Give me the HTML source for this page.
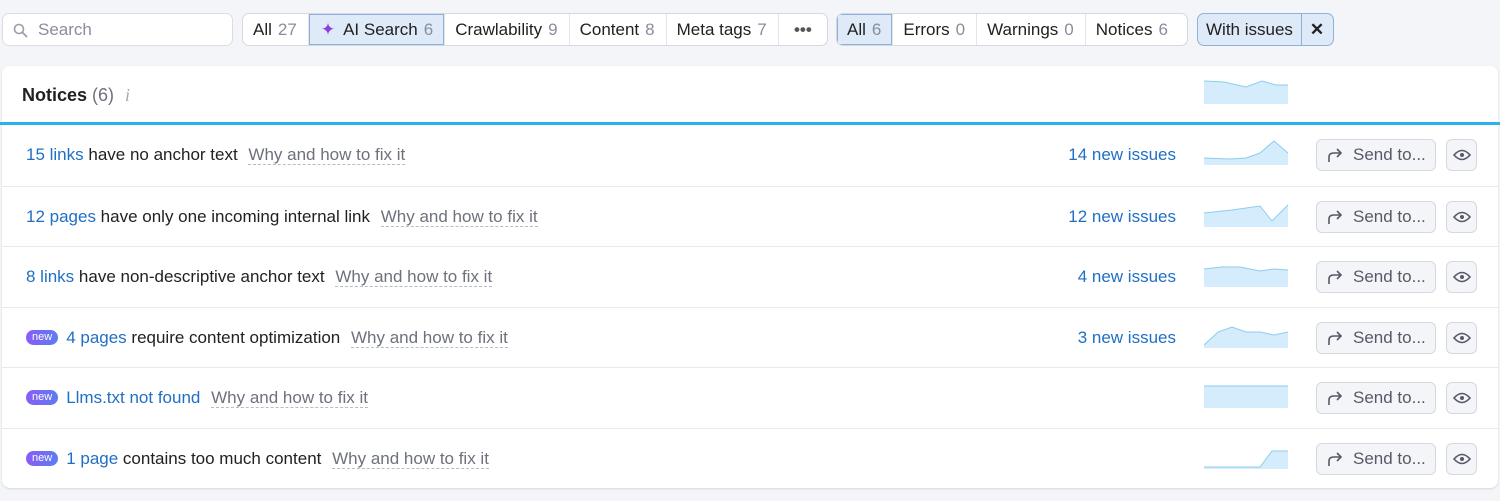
<!DOCTYPE html>
<html><head><meta charset="utf-8"><style>
*{box-sizing:border-box;margin:0;padding:0}
body{width:1500px;height:501px;background:#f4f5f8;font-family:"Liberation Sans",sans-serif;font-size:17px;color:#212121;position:relative;overflow:hidden}
.search{position:absolute;left:2px;top:13px;width:231px;height:33px;background:#fff;border:1px solid #dcdde3;border-radius:7px;color:#8a8e9b;padding-left:35px;line-height:31px}
.grp{position:absolute;top:13px;height:33px;display:flex;background:#fff;border:1px solid #d6d8df;border-radius:7px;overflow:hidden}
.grp div{padding:0 11px 0 10px;line-height:31px;border-right:1px solid #e3e4e9;white-space:nowrap}
.grp div:last-child{border-right:none}
.grp .sel{background:#dfeaf9;box-shadow:inset 0 0 0 1px #8fb0d9}
.grp span{color:#8a8e9b;margin-left:6px}
.card{position:absolute;left:2px;top:66px;width:1496px;height:422px;background:#fff;border-radius:8px;box-shadow:0 1px 2px rgba(0,0,0,.12)}
.hdr{position:absolute;left:22px;top:85px;font-size:18px;font-weight:bold}
.hdr span{font-weight:normal;color:#6d717c}
.blue{position:absolute;left:0;top:122px;width:1500px;height:3px;background:#2ab1ec}
.row{position:absolute;left:2px;width:1496px;height:60px;border-top:1px solid #e8e9ed}
.row .t{position:absolute;left:24px;top:20px;white-space:nowrap}
a{color:#1f6fc5;text-decoration:none}
.why{color:#6d717c;border-bottom:1px dashed #b8bbc4;margin-left:6px}
.new{display:inline-block;background:linear-gradient(90deg,#8a5cf6,#5d7df0);color:#fff;font-size:11px;border-radius:9px;padding:0 6px;height:15px;line-height:15px;vertical-align:3px;margin-right:8px}
.ni{position:absolute;right:322px;top:20px;color:#1f6fc5}
.sp{position:absolute;left:1200px;top:14px}
.send{position:absolute;left:1314px;top:14px;width:120px;height:32px;border:1px solid #d6d8df;background:#f4f5f8;border-radius:6px;color:#555a66;line-height:30px;padding-left:36px}
.send svg{position:absolute;left:9px;top:7px}
.eye{position:absolute;left:1444px;top:14px;width:31px;height:32px;border:1px solid #d6d8df;background:#f4f5f8;border-radius:6px}
.eye svg{position:absolute;left:6px;top:8px}
</style></head><body>
<div class="search"><svg style="position:absolute;left:10px;top:9px" width="15" height="15" viewBox="0 0 15 15"><circle cx="6" cy="6" r="4.5" fill="none" stroke="#9a9ea8" stroke-width="1.6"/><path d="M9.5 9.5L14 14" stroke="#9a9ea8" stroke-width="1.8"/></svg>Search</div>
<div class="grp" style="left:242px;width:586px">
<div>All<span>27</span></div>
<div class="sel"><span style="color:#8b3fe0;margin:0 8px 0 2px">✦</span>AI Search<span>6</span></div>
<div>Crawlability<span>9</span></div>
<div>Content<span>8</span></div>
<div>Meta tags<span>7</span></div>
<div style="flex:1;text-align:center;font-weight:bold;color:#555;padding:0 4px">•••</div>
</div>
<div class="grp" style="left:836px;width:352px">
<div class="sel">All<span>6</span></div>
<div>Errors<span>0</span></div>
<div>Warnings<span>0</span></div>
<div style="flex:1">Notices<span>6</span></div>
</div>
<div class="grp" style="left:1197px;width:137px;background:#dfeaf9;border-color:#8fb0d9">
<div style="border-right:1px solid #8fb0d9;padding:0 8px">With issues</div>
<div style="font-weight:bold;padding:0 8px">✕</div>
</div>
<div class="card"></div>
<div class="hdr">Notices <span>(6)</span> <span style="color:#aaa;font-style:italic;font-family:'Liberation Serif';margin-left:6px">i</span></div>
<svg style="position:absolute;left:1204px;top:79px" width="84" height="25"><path d="M0 2L20 3L42 8L58 2L72 6L84 6V25H0Z" fill="#d4ecfb"/><path d="M0 2L20 3L42 8L58 2L72 6L84 6" fill="none" stroke="#8ccdf0"/></svg>
<div class="blue"></div>

<div class="row" style="top:125px;border-top:none"><div class="t"><a>15 links</a> have no anchor text <span class="why">Why and how to fix it</span></div><div class="ni">14 new issues</div>
<svg class="sp" width="86" height="26"><path d="M2 19L28 20L44 19L58 14L72 2L86 14V26H2Z" fill="#d4ecfb"/><path d="M2 19L28 20L44 19L58 14L72 2L86 14" fill="none" stroke="#8ccdf0"/></svg>
<div class="send"><svg width="18" height="16" viewBox="0 0 18 16"><path d="M3 15V10Q3 6 8 6H15M11 2L15 6L11 10" fill="none" stroke="#555a66" stroke-width="1.6"/></svg>Send to...</div><div class="eye"><svg width="18" height="14" viewBox="0 0 18 14"><path d="M1 7Q9 -2 17 7Q9 16 1 7Z" fill="none" stroke="#555a66" stroke-width="1.6"/><circle cx="9" cy="7" r="2" fill="#555a66"/></svg></div></div>

<div class="row" style="top:186px"><div class="t"><a>12 pages</a> have only one incoming internal link <span class="why">Why and how to fix it</span></div><div class="ni">12 new issues</div>
<svg class="sp" width="86" height="26"><path d="M2 12L30 9L58 5L70 20L86 4V26H2Z" fill="#d4ecfb"/><path d="M2 12L30 9L58 5L70 20L86 4" fill="none" stroke="#8ccdf0"/></svg>
<div class="send"><svg width="18" height="16" viewBox="0 0 18 16"><path d="M3 15V10Q3 6 8 6H15M11 2L15 6L11 10" fill="none" stroke="#555a66" stroke-width="1.6"/></svg>Send to...</div><div class="eye"><svg width="18" height="14" viewBox="0 0 18 14"><path d="M1 7Q9 -2 17 7Q9 16 1 7Z" fill="none" stroke="#555a66" stroke-width="1.6"/><circle cx="9" cy="7" r="2" fill="#555a66"/></svg></div></div>

<div class="row" style="top:246px"><div class="t"><a>8 links</a> have non-descriptive anchor text <span class="why">Why and how to fix it</span></div><div class="ni">4 new issues</div>
<svg class="sp" width="86" height="26"><path d="M2 8L20 6L38 6L58 10L72 8L86 9V26H2Z" fill="#d4ecfb"/><path d="M2 8L20 6L38 6L58 10L72 8L86 9" fill="none" stroke="#8ccdf0"/></svg>
<div class="send"><svg width="18" height="16" viewBox="0 0 18 16"><path d="M3 15V10Q3 6 8 6H15M11 2L15 6L11 10" fill="none" stroke="#555a66" stroke-width="1.6"/></svg>Send to...</div><div class="eye"><svg width="18" height="14" viewBox="0 0 18 14"><path d="M1 7Q9 -2 17 7Q9 16 1 7Z" fill="none" stroke="#555a66" stroke-width="1.6"/><circle cx="9" cy="7" r="2" fill="#555a66"/></svg></div></div>

<div class="row" style="top:307px"><div class="t"><span class="new">new</span><a>4 pages</a> require content optimization <span class="why">Why and how to fix it</span></div><div class="ni">3 new issues</div>
<svg class="sp" width="86" height="26"><path d="M2 23L16 10L30 5L44 10L58 10L72 13L86 10V26H2Z" fill="#d4ecfb"/><path d="M2 23L16 10L30 5L44 10L58 10L72 13L86 10" fill="none" stroke="#8ccdf0"/></svg>
<div class="send"><svg width="18" height="16" viewBox="0 0 18 16"><path d="M3 15V10Q3 6 8 6H15M11 2L15 6L11 10" fill="none" stroke="#555a66" stroke-width="1.6"/></svg>Send to...</div><div class="eye"><svg width="18" height="14" viewBox="0 0 18 14"><path d="M1 7Q9 -2 17 7Q9 16 1 7Z" fill="none" stroke="#555a66" stroke-width="1.6"/><circle cx="9" cy="7" r="2" fill="#555a66"/></svg></div></div>

<div class="row" style="top:367px"><div class="t"><span class="new">new</span><a>Llms.txt not found</a> <span class="why">Why and how to fix it</span></div>
<svg class="sp" width="86" height="26"><path d="M2 4H86V26H2Z" fill="#d4ecfb"/><path d="M2 4H86" fill="none" stroke="#8ccdf0"/></svg>
<div class="send"><svg width="18" height="16" viewBox="0 0 18 16"><path d="M3 15V10Q3 6 8 6H15M11 2L15 6L11 10" fill="none" stroke="#555a66" stroke-width="1.6"/></svg>Send to...</div><div class="eye"><svg width="18" height="14" viewBox="0 0 18 14"><path d="M1 7Q9 -2 17 7Q9 16 1 7Z" fill="none" stroke="#555a66" stroke-width="1.6"/><circle cx="9" cy="7" r="2" fill="#555a66"/></svg></div></div>

<div class="row" style="top:428px"><div class="t"><span class="new">new</span><a>1 page</a> contains too much content <span class="why">Why and how to fix it</span></div>
<svg class="sp" width="86" height="26"><path d="M2 24H58L70 8H86V26H2Z" fill="#d4ecfb"/><path d="M2 24H58L70 8H86" fill="none" stroke="#8ccdf0"/></svg>
<div class="send"><svg width="18" height="16" viewBox="0 0 18 16"><path d="M3 15V10Q3 6 8 6H15M11 2L15 6L11 10" fill="none" stroke="#555a66" stroke-width="1.6"/></svg>Send to...</div><div class="eye"><svg width="18" height="14" viewBox="0 0 18 14"><path d="M1 7Q9 -2 17 7Q9 16 1 7Z" fill="none" stroke="#555a66" stroke-width="1.6"/><circle cx="9" cy="7" r="2" fill="#555a66"/></svg></div></div>
</body></html>
